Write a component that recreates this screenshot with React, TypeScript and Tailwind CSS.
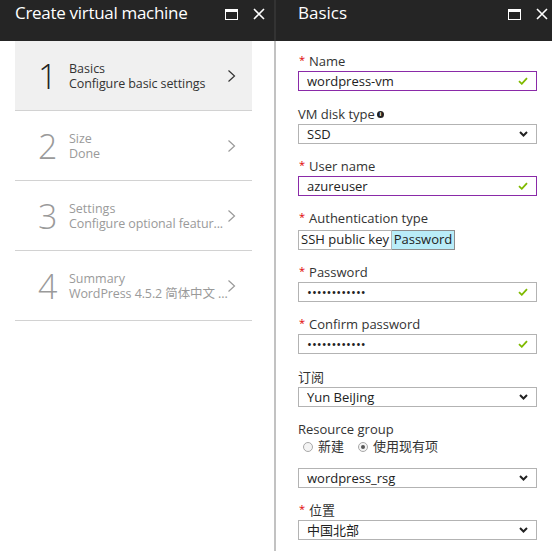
import React from "react";

const Chevron = ({ color }: { color: string }) => (
  <svg width="9" height="14" viewBox="0 0 9 14" className="shrink-0">
    <path d="M1.5 1.5 L7.5 7 L1.5 12.5" fill="none" stroke={color} strokeWidth="1.2" />
  </svg>
);

const Check = () => (
  <svg width="10" height="8" viewBox="0 0 10 8" className="shrink-0">
    <path d="M1 4.2 L3.8 6.8 L9 1.2" fill="none" stroke="#7fba00" strokeWidth="1.8" />
  </svg>
);

const Down = () => (
  <svg width="9" height="6" viewBox="0 0 9 6" className="shrink-0">
    <path d="M1 1 L4.5 4.5 L8 1" fill="none" stroke="#222" strokeWidth="2" />
  </svg>
);

const HeaderIcons = () => (
  <div className="flex items-center gap-[15px] pt-[8px]">
    <div className="w-[13px] h-[11px] border border-white border-t-[3px]" />
    <svg width="12" height="12" viewBox="0 0 12 12">
      <path d="M1 1 L11 11 M11 1 L1 11" stroke="white" strokeWidth="1.6" />
    </svg>
  </div>
);

type Step = { n: string; t: string; s: string; active?: boolean };
const steps: Step[] = [
  { n: "1", t: "Basics", s: "Configure basic settings", active: true },
  { n: "2", t: "Size", s: "Done" },
  { n: "3", t: "Settings", s: "Configure optional featur..." },
  { n: "4", t: "Summary", s: "WordPress 4.5.2 简体中文 ..." },
];

const Label = ({ text, req, info }: { text: string; req?: boolean; info?: boolean }) => (
  <div className="flex items-center h-[16px] text-[13px] text-[#333] leading-none">
    {req && <span className="text-[#e00000] text-[11px] mr-[4px] ml-[1px] -mt-[3px]">*</span>}
    <span>{text}</span>
    {info && (
      <span className="ml-[2px] w-[7px] h-[7px] rounded-full bg-[#222] text-white text-[6px] font-bold flex items-center justify-center leading-none">
        i
      </span>
    )}
  </div>
);

const Input = ({ value, purple, check, select }: { value: string; purple?: boolean; check?: boolean; select?: boolean }) => (
  <div
    className={`mt-[2px] h-[20px] w-[239px] flex items-center pl-[8px] pr-[8px] border text-[13px] text-[#222] ${
      purple ? "border-[#8a2aa8]" : "border-[#b3b3b3]"
    }`}
  >
    <span className="flex-1 truncate leading-[18px]">{value}</span>
    {check && <Check />}
    {select && <Down />}
  </div>
);

const Radio = ({ on, label }: { on?: boolean; label: string }) => (
  <div className="flex items-center gap-[5px]">
    <span className="w-[10px] h-[10px] rounded-full border border-[#a8a8a8] bg-[#f4f4f4] flex items-center justify-center">
      {on && <span className="w-[4px] h-[4px] rounded-full bg-[#555]" />}
    </span>
    <span>{label}</span>
  </div>
);

export default function App() {
  return (
    <div
      className="flex w-[552px] h-[551px] bg-white overflow-hidden"
      style={{ fontFamily: "'Open Sans', 'Noto Sans CJK SC', sans-serif" }}
    >
      {/* Left panel */}
      <div className="w-[274px] flex flex-col">
        <div className="h-[41px] bg-[#252525] flex items-start justify-between pl-[15px] pr-[9px]">
          <div className="text-white text-[17px] leading-[26px] tracking-[-0.3px]">Create virtual machine</div>
          <HeaderIcons />
        </div>
        <div className="ml-[15px] w-[237px]">
          {steps.map((s) => (
            <div
              key={s.n}
              className={`h-[70px] border-b border-[#d2d2d2] flex items-center pl-[23px] pr-[16px] ${
                s.active ? "bg-[#f0f0f0]" : ""
              }`}
            >
              <div
                className={`w-[31px] text-[34px] font-light leading-none ${s.active ? "text-[#222]" : "text-[#9a9a9a]"}`}
              >
                {s.n}
              </div>
              <div
                className={`w-[158px] text-[12.5px] leading-[15px] whitespace-nowrap ${
                  s.active ? "text-[#333]" : "text-[#9a9a9a]"
                }`}
              >
                <div>{s.t}</div>
                <div className="tracking-[-0.1px]">{s.s}</div>
              </div>
              <div className="ml-auto">
                <Chevron color={s.active ? "#333" : "#9a9a9a"} />
              </div>
            </div>
          ))}
        </div>
      </div>

      {/* Divider */}
      <div className="w-[2px] flex flex-col">
        <div className="h-[41px] bg-[#333]" />
        <div className="flex-1 bg-[#c2c2c2]" />
      </div>

      {/* Right panel */}
      <div className="flex-1 flex flex-col">
        <div className="h-[41px] bg-[#252525] flex items-start justify-between pl-[22px] pr-[4px]">
          <div className="text-white text-[17px] leading-[26px]">Basics</div>
          <HeaderIcons />
        </div>
        <div className="pl-[22px] pt-[12px] flex flex-col">
          <Label text="Name" req />
          <Input value="wordpress-vm" purple check />

          <div className="mt-[15px]">
            <Label text="VM disk type" info />
            <Input value="SSD" select />
          </div>

          <div className="mt-[14px]">
            <Label text="User name" req />
            <Input value="azureuser" purple check />
          </div>

          <div className="mt-[14px]">
            <Label text="Authentication type" req />
            <div className="mt-[4px] flex text-[13px] text-[#222] h-[20px]">
              <div className="w-[94px] border border-[#b3b3b3] flex items-center justify-center">SSH public key</div>
              <div className="w-[63px] border border-l-0 border-[#8c8c8c] bg-[#b9ecf8] flex items-center justify-center">
                Password
              </div>
            </div>
          </div>

          <div className="mt-[14px]">
            <Label text="Password" req />
            <Input value="••••••••••••" check />
          </div>

          <div className="mt-[14px]">
            <Label text="Confirm password" req />
            <Input value="••••••••••••" check />
          </div>

          <div className="mt-[15px]">
            <Label text="订阅" />
            <Input value="Yun BeiJing" select />
          </div>

          <div className="mt-[14px]">
            <Label text="Resource group" />
            <div className="mt-[2px] h-[16px] flex items-center gap-[14px] pl-[5px] text-[13px] text-[#333]">
              <Radio label="新建" />
              <Radio on label="使用现有项" />
            </div>
            <div className="mt-[13px]">
              <Input value="wordpress_rsg" select />
            </div>
          </div>

          <div className="mt-[14px]">
            <Label text="位置" req />
            <Input value="中国北部" select />
          </div>
        </div>
      </div>
    </div>
  );
}
